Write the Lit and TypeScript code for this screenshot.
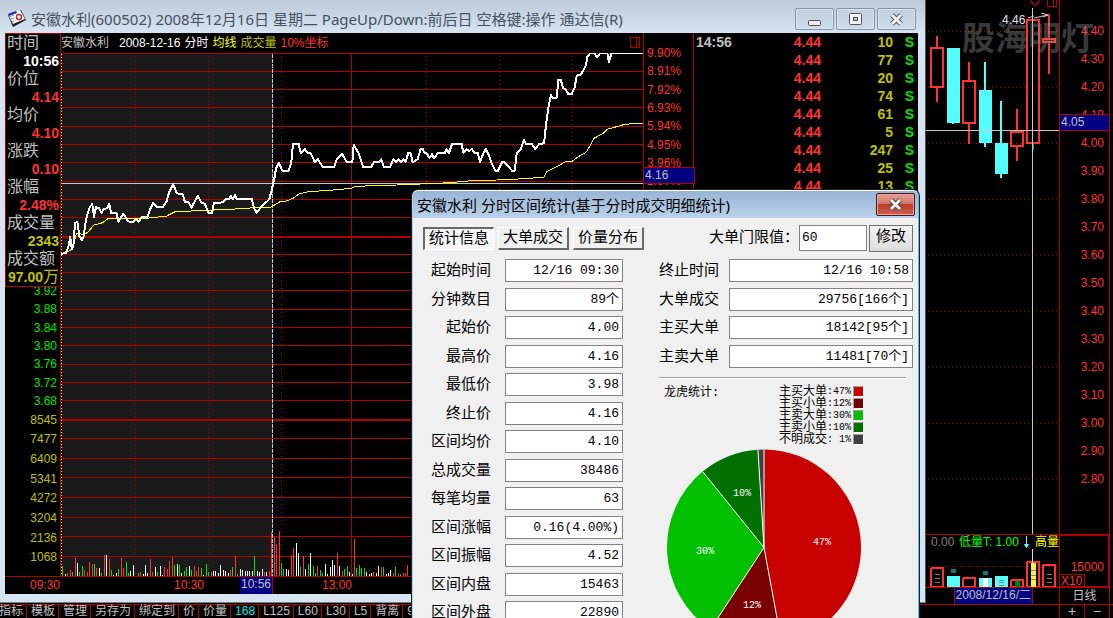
import { LitElement, html, svg, css } from "lit";
import { customElement } from "lit/decorators.js";

type Pt = [number, number];

/** Places a run of samples, stored at three units per pixel, on the chart. */
const place = (ox: number, oy: number, flat: number[]): Pt[] => {
  const out: Pt[] = [];
  for (let i = 0; i < flat.length; i += 2) out.push([ox + flat[i] / 3, oy + flat[i + 1] / 3]);
  return out;
};
const join = (pts: Pt[]) => pts.map(([x, y]) => `${x.toFixed(1)},${y.toFixed(1)}`).join(" ");

const PRICE = join([
  ...place(0, 200, [183,162,198,158,205,140,211,110,215,147,220,140,225,70,232,65,238,108,246,120,252,108,255,75,262,45,270,20,277,12,282,50,288,22,297,25,304,38,312,27,322,25,328,12,333,38,350,40,355,65,370,42,377,52,384,64,400,67,407,58,416,65,425,52,442,52,450,28]),
  ...place(0, 0, [460,609,472,622,488,622,500,603,508,575,520,553,530,580,548,583,555,607,566,607,574,623,594,587,603,607,615,612,625,638,636,638,642,609,670,607,677,597,688,598,692,587,698,597,705,585,710,597,755,597,762,625,770,638,780,625,795,610,808,598,815,570,820,550]),
  ...place(270, 0, [14,530,18,505,27,488,37,512,56,512,64,488,69,432,86,432,92,460,104,447,112,458,122,460,135,487,143,477,158,500,193,500,200,478,217,462,230,487,247,487,251,435,266,460,279,500,304,500,312,487,328,487,334,478,342,502,361,500,370,478,378,487,385,478,393,485,400,478,407,485,415,458,422,460,428,487,443,477,452,447,458,447,464,460,470,460,478,473,486,463,492,475,503,460,524,460,530,448,537,460,546,432,575,432,580,458,590,448,598,453,605,447,614,458,624,460,630,487,640,460,648,447,656,465,664,487,676,512,684,512,696,487,704,487,714,498,726,512,734,512,740,460,752,447,762,420,768,432,786,432,795,447,808,432]),
  ...place(540, 0, [12,430,18,375,25,325,33,285,37,293,50,293,55,240,62,240,70,265,77,268,85,282,95,282,104,262,110,227,122,224,132,208,138,195,142,170,150,160,163,160,171,172,180,160,202,160,207,187,214,160,311,160]),
]);

const AVERAGE = join([
  ...place(0, 200, [183,162,205,155,218,145,222,125,230,100,248,103,262,98,282,75,308,68,325,55,430,56,500,48,525,35,620,31,690,28,750,24]),
  ...place(270, 0, [0,623,30,605,48,603,70,595,85,583,115,575,180,571,245,565,255,560,300,557,380,555,452,552,505,550,550,547,605,542,680,540,745,537]),
  ...place(540, 0, [11,532,20,515,50,500,75,486,97,484,115,470,138,457,150,438,162,415,190,400,203,387,230,380,255,373,280,371,311,370]),
]);

/** Volume bars: position, height (three units per pixel) and colour letter. */
const bars = (text: string) =>
  text.split(" ").map((b) => {
    const [x, h, c] = b.split(",");
    return { x: Math.floor(Number(x) / 3), h: Number(h) / 3, c };
  });
const VOLUME = bars(
  "188,30,g 197,6,w 203,8,r 211,17,r 218,11,g 226,53,r 232,38,w 239,11,g 247,29,g 254,17,r 262,13,r 268,41,r 277,35,r 284,35,g 290,23,r 298,23,w 304,8,g 314,62,r 320,62,w 328,50,r 334,17,g 341,3,w 350,8,w 355,20,g 364,53,r 371,23,r 379,41,g 386,8,g 391,14,w 400,32,w 415,8,g 422,11,r 430,6,w 436,32,w 443,8,w 451,50,r 457,11,r 466,26,w 472,12,g 481,29,w 488,3,w 493,26,r 502,20,r 508,44,r 517,56,r 524,32,g 532,35,w 538,32,g 544,8,w 553,14,g 559,26,g 568,29,w 574,17,g 583,29,r 589,14,r 595,26,r 604,23,g 610,3,w 619,35,g 625,11,g 634,11,r 640,14,w 646,14,w 655,8,w 661,32,w 670,17,w 676,14,w 685,8,w 691,17,r 697,26,g 706,59,r 712,6,g 721,20,w 727,17,w 736,14,w 742,14,w 748,14,w 757,14,w 763,59,g 772,14,w 778,11,w 787,20,w 793,11,r 799,11,w 808,14,r 814,131,r 823,117,r 829,95,r 838,134,r 844,38,g 850,20,g 859,20,w 865,17,w 874,62,r 880,83,r 889,98,w 895,68,w 901,26,g 910,59,r 916,20,w 925,35,g 931,68,w 940,29,g 946,8,g 952,29,r 961,17,g 967,8,g 976,35,w 982,6,w 991,26,w 997,47,w 1003,32,w 1012,68,r 1018,29,w 1027,14,r 1033,20,g 1042,29,g 1048,11,w 1057,6,w 1063,110,r 1069,23,g 1078,32,g 1084,23,g 1093,23,g 1099,11,w 1108,6,w 1114,8,w 1120,11,r 1129,8,w 1135,29,w 1144,26,r 1150,26,g 1159,6,w 1165,8,w 1171,17,w 1180,8,r 1186,26,g 1195,8,r 1201,6,g 1210,8,r 1216,8,r 1222,32,r"
);

const PRICE_LINES = [53, 71, 89, 107, 126, 144, 162, 181, 199, 217, 254, 272, 290, 309, 327, 345, 364, 382, 400];
const VOLUME_LINES = [438, 458, 477, 497, 517, 536, 556];
const INFO: [string, string, string][] = [
  ["时间", "10:56", "white"],
  ["价位", "4.14", "red"],
  ["均价", "4.10", "red"],
  ["涨跌", "0.10", "red"],
  ["涨幅", "2.48%", "red"],
  ["成交量", "2343", "gold"],
  ["成交额", "97.00", "gold"],
];
const TICKS = ["10", "77", "20", "74", "61", "5", "247", "25", "13"];
const TOOLS = ["指标", "模板", "管理", "另存为", "绑定到", "价", "价量", "168", "L125", "L60", "L30", "L5", "背离", "9"];

const base = css`
  * { box-sizing: border-box; }
  button, input, table { font: inherit; color: inherit; }
  .red { color: #ff3232; }
  .gold { color: #c0c000; }
  .white { color: #fff; }
  .green { color: #00e600; }
`;

@customElement("minute-chart")
class MinuteChart extends LitElement {
  static styles = [base, css`
    :host {
      display: grid;
      position: relative;
      grid-template-columns: 55px minmax(0, 1fr) 51px 224px;
      grid-template-rows: 20px minmax(0, 1fr) 18px;
      background: #000;
      color: #c0c0c0;
      overflow: hidden;
    }
    .head { grid-area: 1 / 2; display: flex; gap: 4px; padding: 0 2px 0 1px; line-height: 20px; white-space: nowrap; }
    .head .name { margin-right: 6px; }
    .head .avg { color: #ff0; }
    .head .mark { margin-left: auto; width: 11px; height: 20px; }
    .plot { grid-area: 2 / 2; display: block; width: 100%; height: 100%; }
    .axis { display: grid; grid-template-rows: 366fr 157fr; padding: 11px 0 27px; line-height: 18px; }
    .left { grid-area: 1 / 1 / 4; text-align: right; padding-right: 3px; }
    .right { grid-area: 1 / 3 / 4; padding-left: 3px; border: solid #b00000; border-width: 0 1px; }
    .scale { display: grid; grid-template-rows: repeat(20, minmax(0, 1fr)); grid-template-columns: minmax(0, 1fr); align-items: center; }
    .scale.vol { grid-template-rows: repeat(8, minmax(0, 1fr)); }
    .scale.fall::before { content: ""; grid-area: 1 / 1 / 14; }
    .times { grid-area: 3 / 1 / 4 / 3; display: grid; grid-template-columns: 55px 144fr 148fr 291fr; position: relative; border-top: 1px solid #b00000; line-height: 16px; text-align: right; }
    .cursor { position: absolute; background: #000080; border: solid #b00000; color: #c0c0c0; }
    .time { left: 235px; top: 0; width: 33px; height: 17px; border-width: 0 1px 0 0; text-align: center; line-height: 15px; }
    .level { left: 638px; top: 134px; width: 52px; height: 17px; border-width: 1px; line-height: 15px; padding-left: 1px; }
    .ticks { grid-area: 1 / 4 / 4; align-self: start; width: 224px; table-layout: fixed; border-collapse: collapse; font-weight: bold; font-size: 14px; line-height: 18px; }
    .ticks td { padding: 0; height: 18px; text-align: right; }
    .ticks td:first-child { text-align: left; padding-left: 2px; width: 60px; }
    .ticks .price { width: 67px; }
    .ticks .lots { width: 72px; }
    .ticks .side { padding-right: 4px; }
    .info { position: absolute; left: 0; top: 0; width: 56px; margin: 0; background: #000; border: 1px solid #b00000; font-size: 16px; line-height: 18px; padding: 0 1px; white-space: nowrap; }
    .info dt { height: 18px; }
    .info dd { margin: 0; height: 18px; text-align: right; font-weight: bold; font-size: 14px; }
    .info .unit { font-weight: normal; font-size: 16px; line-height: 16px; }
  `];
  render() {
    const colour: Record<string, string> = { r: "#ff3232", g: "#00e600", w: "#fff" };
    return html`
      <div class="head">
        <span class="name">安徽水利</span><span class="white">2008-12-16</span><span class="white">分时</span>
        <span class="avg">均线</span><span class="gold">成交量</span><span class="red">10%坐标</span>
        <svg class="mark" viewBox="0 0 11 20" fill="none" stroke="#b00000" shape-rendering="crispEdges"><path d="M.5 4.5h9v10h-9zM6.500 4.500v10" /></svg>
      </div>
      <div class="axis left">
        <div class="scale fall">${["3.92", "3.88", "3.84", "3.80", "3.76", "3.72", "3.68"].map((t) => html`<span class="green">${t}</span>`)}</div>
        <div class="scale vol">${[8545, 7477, 6409, 5341, 4272, 3204, 2136, 1068].map((t) => html`<span class="gold">${t}</span>`)}</div>
      </div>
      <svg class="plot" viewBox="60 53 583 523" preserveAspectRatio="none" shape-rendering="crispEdges" fill="none">
        <rect x="61" y="53" width="211" height="523" fill="#1a1a1a" />
        ${PRICE_LINES.concat(VOLUME_LINES).map((y) => svg`<rect x="60" y=${y} width="583" height="1" fill="#b00000" />`)}
        <path d="M60 237H643M60 420H643" stroke="#b00000" stroke-width="2" />
        <path d="M60.500 53V576M351.500 53V576" stroke="#b00000" />
        <path d="M135.500 56V576M208.500 56V576M281.500 56V576M426.500 56V576M499.500 56V576M572.500 56V576" stroke="#b00000" stroke-dasharray="1 3" />
        <path d="M61.500 54V576" stroke="#ffff54" stroke-dasharray="1 2" />
        ${VOLUME.map((b) => svg`<rect x=${b.x} y=${576 - b.h} width="1" height=${b.h} fill=${colour[b.c]} />`)}
        <path d="M60 183.500H643" stroke="#c8c8c8" />
        <path d="M272.500 54V576" stroke="#000080" />
        <path d="M272.500 54V576" stroke="#c8c8c8" stroke-dasharray="4 1" />
        <polyline points=${AVERAGE} stroke="#ff0" stroke-width="1" />
        <polyline points=${PRICE} stroke="#fff" stroke-width="2" stroke-linejoin="round" />
      </svg>
      <div class="axis right red">
        <div class="scale">${["9.90%", "8.91%", "7.92%", "6.93%", "5.94%", "4.95%", "3.96%", "2.97%"].map((t) => html`<span>${t}</span>`)}</div>
      </div>
      <table class="ticks">
        ${TICKS.map((n, i) => html`<tr><td>${i ? "" : "14:56"}</td><td class="price red">4.44</td><td class="lots gold">${n}</td><td class="side green">S</td></tr>`)}
      </table>
      <div class="times red"><span>09:30</span><span>10:30</span><span>13:00</span><span class="cursor time">10:56</span></div>
      <span class="cursor level">4.16</span>
      <dl class="info">
        ${INFO.map(([k, v, c], i) => html`<dt>${k}</dt><dd class=${c}>${v}${i === 6 ? html`<span class="unit">万</span>` : ""}</dd>`)}
      </dl>
    `;
  }
}

@customElement("daily-chart")
class DailyChart extends LitElement {
  static styles = [base, css`
    :host {
      display: grid;
      position: relative;
      grid-template-columns: minmax(0, 1fr) 51px 3px;
      grid-template-rows: minmax(0, 1fr) 54px 16px 14px;
      background: #000;
      color: #c0c0c0;
      overflow: hidden;
    }
    .cell { border-left: 1px solid #b00000; border-right: 1px solid #b00000; }
    .plot { grid-area: 1 / 1; display: block; width: 100%; height: 100%; }
    .prices { grid-area: 1 / 2; position: relative; display: grid; grid-template-columns: minmax(0, 1fr); grid-template-rows: 17fr repeat(17, 28fr) 41fr; align-items: center; text-align: right; padding-right: 5px; line-height: 14px; }
    .prices::before { content: ""; grid-area: 1 / 1; }
    .level { position: absolute; left: 0; right: 0; top: 114px; height: 17px; background: #000080; border: solid #b00000; border-width: 1px 0; color: #c0c0c0; text-align: left; padding-left: 1px; line-height: 15px; }
    .volume { grid-area: 2 / 1; display: grid; grid-template-rows: 14px minmax(0, 1fr); border: solid #b00000; border-width: 1px 0; }
    .legend { display: flex; justify-content: space-between; padding: 0 0 0 5px; line-height: 15px; white-space: nowrap; color: #808080; }
    .low { color: #0f0; }
    .high { color: #ff0; }
    .down { width: 7px; height: 15px; }
    .bars { display: block; width: 100%; height: 100%; }
    .units { grid-area: 2 / 2; display: flex; flex-direction: column; justify-content: space-between; border: 2px solid #b00000; border-left-width: 1px; line-height: 14px; padding-top: 24px; }
    .units .max { text-align: right; padding-right: 4px; }
    .units .times { align-self: flex-start; border: solid #b00000; border-width: 1px 1px 0 0; padding: 0 2px 0 1px; line-height: 13px; }
    .date { grid-area: 3 / 1; justify-self: end; margin-right: 26px; background: #000080; border: solid #b00000; border-width: 0 1px; line-height: 15px; white-space: nowrap; padding: 0 1px; }
    .period { grid-area: 3 / 2; text-align: center; line-height: 16px; }
    .zoom { grid-area: 4 / 1 / 5 / 4; border-top: 1px solid #b00000; display: grid; grid-template-columns: minmax(0, 1fr) 25px 26px 3px; }
    .zoom button { grid-row: 1; background: none; border: 0; border-left: 1px solid #b00000; padding: 0; font-size: 14px; line-height: 13px; }
    .zoom .in { grid-column: 2; }
    .zoom .out { grid-column: 3; border-right: 1px solid #b00000; }
    .note { position: absolute; left: 76px; top: 13px; line-height: 14px; color: #e0e0e0; }
    .mark { position: absolute; left: 36px; top: 12px; font: bold 33px/48px "Noto Sans CJK SC", sans-serif; color: rgba(150, 150, 150, 0.4); white-space: nowrap; }
  `];
  render() {
    const labels = Array.from({ length: 17 }, (_, i) => (4.4 - i * 0.1).toFixed(2));
    return html`
      <svg class="plot" viewBox="926 0 133 534" preserveAspectRatio="none" shape-rendering="crispEdges" fill="none">
        <path d="M928 31.500H1059M928 87.500H1059M928 143.500H1059M928 199.500H1059M928 255.500H1059M928 311.500H1059M928 367.500H1059M928 423.500H1059M928 479.500H1059" stroke="#b00000" stroke-dasharray="1 3" />
        <path d="M1030 0l5 6 5-6M1047.500 0v6.500h9V0M1053.500 0v6.500" stroke="#b00000" />
        <g stroke="#ff3232" stroke-width="2">
          <path d="M937 36V48M937 87V102M969 62V81M969 124V144M1017 109V132M1017 147V161M1049 14V39M1049 43V74" />
          <path d="M931 48h12v39h-12zM963 81h12v42h-12zM1011 132h12v14h-12zM1027 20h12v123h-12zM1043 39h12v3h-12z" />
        </g>
        <path d="M947 48h13v75h-13zM952 123h2v1h-2zM979 90h13v53h-13zM984 62h2v85h-2zM995 143h13v31h-13zM1000 101h2v77h-2z" fill="#54ffff" />
        <path d="M1033 143v7" stroke="#109090" stroke-width="2" />
        <path d="M926 130.500H1059M1032.500 8V534" stroke="#c8c8c8" />
        <path d="M1028 18l6-2M1034 18l14-3M1041 13l7 2-5 2" stroke="#c8c8c8" shape-rendering="auto" />
      </svg>
      <div class="prices cell red">
        ${labels.map((t) => html`<span>${t}</span>`)}
        <span class="level">4.05</span>
      </div>
      <div class="volume">
        <div class="legend">
          <span>0.00</span><span class="low">低量T: 1.00</span>
          <svg class="down" viewBox="0 0 7 15" stroke="#54ffff" fill="#54ffff"><path d="M3.500 1v12M1.500 9.500h4l-2 3z" /></svg>
          <span class="high">高量</span>
        </div>
        <svg class="bars" viewBox="926 549 133 38" preserveAspectRatio="none" shape-rendering="crispEdges" fill="none">
          <path d="M928 566.500H1059" stroke="#b00000" stroke-dasharray="1 3" />
          <g stroke="#ff3232" stroke-width="2">
            <rect x="931" y="568" width="12" height="19" rx="1" /><rect x="963" y="578" width="12" height="9" rx="1" />
            <rect x="1011" y="580" width="12" height="7" rx="1" /><rect x="1027" y="562" width="12" height="25" rx="1" />
            <rect x="1043" y="565" width="12" height="22" rx="1" />
          </g>
          <path d="M947 576h13v11h-13zM979 578h13v9h-13zM995 576h13v11h-13z" fill="#54ffff" />
          <path d="M951 569h5v4h-5zM983 571h5v4h-5z" fill="#008080" />
          <path d="M983 578h5v9h-5z" fill="#fff" />
          <path d="M1015 581h5v6h-5z" fill="#008000" />
          <path d="M1031 563h5v24h-5z" fill="#ff0" />
          <path d="M1032.500 549V587" stroke="#d8d8ff" />
          <path d="M935 574.500h5M935 578.500h5M935 582.500h5M999 580.500h5M999 582.500h5M999 585.500h5M1031 570.500h5M1031 575.500h5M1031 579.500h5M1047 574.500h5M1047 578.500h5M1047 582.500h5" stroke="#808080" />
        </svg>
      </div>
      <div class="units red"><span class="max">15000</span><span class="times">X10</span></div>
      <span class="date">2008/12/16/二</span>
      <span class="period cell">日线</span>
      <div class="zoom"><button class="in" aria-label="放大">+</button><button class="out" aria-label="缩小">−</button></div>
      <span class="note">4.46</span>
      <span class="mark">股海明灯</span>
    `;
  }
}

@customElement("stats-dialog")
class StatsDialog extends LitElement {
  static styles = [base, css`
    :host {
      display: block;
      background: #f0f0f0;
      border: 1px solid #b4d0ec;
      border-top-color: #fff;
      border-right-color: #3cc8f0;
      border-radius: 6px 6px 0 0;
      box-shadow: 0 0 0 1px #202020;
      overflow: hidden;
      color: #000;
      font: 15px/22px "Liberation Mono", "Noto Sans CJK SC", monospace;
    }
    .bar { display: flex; justify-content: space-between; height: 27px; padding: 2px 3px 0 4px; background: linear-gradient(#98b4d4, #b9d1ea); font: 15px/24px "Noto Sans", "Noto Sans CJK SC", sans-serif; }
    .bar h1 { margin: 0; font: inherit; font-size: 15px; white-space: nowrap; }
    .close { width: 39px; height: 23px; padding: 0; border: 1px solid #48181c; border-radius: 2px; box-shadow: inset 0 0 0 1px #e8a49c; background: linear-gradient(#e0a090, #d4796c 45%, #b83c28 50%, #cc6450); }
    .close svg { display: block; margin: auto; }
    .body { display: grid; grid-template-columns: 200px minmax(0, 1fr); column-gap: 36px; row-gap: 7px; padding: 6px 5px 0 10px; }
    .tabs { display: flex; gap: 4px; align-items: center; height: 28px; white-space: nowrap; }
    .tabs button { flex: none; width: 71px; height: 23px; padding: 2px 0 0; line-height: 18px; background: #f0f0f0; border: 1px solid #fff; border-right: 2px solid #696969; border-bottom: 2px solid #696969; }
    .tabs .on { background: repeating-conic-gradient(#fff 0 25%, #f0f0f0 0 50%) 0 0 / 2px 2px; border: 1px solid #fff; border-left: 2px solid #696969; border-top: 2px solid #696969; }
    .limit { display: flex; justify-content: flex-end; align-items: center; white-space: nowrap; line-height: 26px; }
    .limit label { padding-top: 2px; }
    .limit input { width: 68px; height: 26px; margin: 0 2px 0 0; padding: 0 2px; text-align: left; }
    .limit button { width: 44px; height: 27px; padding: 0; line-height: 24px; background: linear-gradient(#f4f4f4, #dcdcdc); border: 1px solid #707070; }
    input { border: 1px solid #828282; border-radius: 0; background: #fff; font-size: 13px; min-width: 0; height: 23px; padding: 0 3px; text-align: right; outline: 0; }
    .fields { display: grid; grid-auto-rows: 29px 28px; align-items: start; line-height: 26px; text-align: right; white-space: nowrap; }
    .left { grid-template-columns: minmax(0, 1fr) 118px; column-gap: 14px; padding-left: 8px; }
    .right { grid-template-columns: 60px minmax(0, 1fr); column-gap: 10px; }
    hr { margin: 4px 7px 7px 0; border: 0; border-top: 1px solid #a0a0a0; border-bottom: 1px solid #fff; }
    .share { display: flex; justify-content: space-between; padding: 0 49px 0 5px; font-size: 12px; line-height: 14px; }
    ul { list-style: none; margin: 0; padding: 0; font-size: 12px; line-height: 12px; }
    li { display: flex; justify-content: flex-end; height: 12px; white-space: pre; }
    .num { font-size: 10px; }
    .chip { width: 11px; height: 11px; margin-left: 2px; border: 1px solid #a0a0a0; border-right-color: #fff; border-bottom-color: #fff; }
    .c0 { background: #c80000; }
    .c1 { background: #780000; }
    .c2 { background: #00c000; }
    .c3 { background: #007000; }
    .c4 { background: #404040; }
    .pie { display: block; margin: 3px 0 0 7px; font-size: 10px; }
  `];
  private field(label: string, value: string, id: string) {
    return html`<label for=${id}>${label}</label><input id=${id} readonly .value=${value} />`;
  }
  render() {
    const left = [["起始时间", "12/16 09:30"], ["分钟数目", "89个"], ["起始价", "4.00"], ["最高价", "4.16"], ["最低价", "3.98"], ["终止价", "4.16"], ["区间均价", "4.10"], ["总成交量", "38486"], ["每笔均量", "63"], ["区间涨幅", "0.16(4.00%)"], ["区间振幅", "4.52"], ["区间内盘", "15463"], ["区间外盘", "22890"]];
    const right = [["终止时间", "12/16 10:58"], ["大单成交", "29756[166个]"], ["主买大单", "18142[95个]"], ["主卖大单", "11481[70个]"]];
    const legend = [["主买大单", ":47%"], ["主买小单", ":12%"], ["主卖大单", ":30%"], ["主卖小单", ":10%"], ["不明成交", ": 1%"]];
    const stops = [0, 0.4706, 0.593, 0.891, 0.99, 1];
    const fills = ["#c80000", "#780000", "#00c000", "#007000", "#404040"];
    const at = (f: number) => `${(98 + 97 * Math.sin(f * 2 * Math.PI)).toFixed(2)} ${(98.5 - 98 * Math.cos(f * 2 * Math.PI)).toFixed(2)}`;
    return html`
      <header class="bar">
        <h1>安徽水利 分时区间统计(基于分时成交明细统计)</h1>
        <button class="close" aria-label="关闭"><svg width="15" height="13" viewBox="0 0 15 13"><path d="M3 2l9 9M12 2l-9 9" stroke="#5a3a40" stroke-width="5" /><path d="M3 2l9 9M12 2l-9 9" stroke="#f4f4f4" stroke-width="3" /></svg></button>
      </header>
      <div class="body">
        <div class="tabs"><button class="on">统计信息</button><button>大单成交</button><button>价量分布</button></div>
        <div class="limit"><label for="limit">大单门限值：</label><input id="limit" .value=${"60"} /><button>修改</button></div>
        <div class="fields left">${left.map(([k, v], i) => this.field(k, v, `l${i}`))}</div>
        <div>
          <div class="fields right">${right.map(([k, v], i) => this.field(k, v, `r${i}`))}</div>
          <hr />
          <div class="share">
            <span>龙虎统计:</span>
            <ul>${legend.map(([k, v], i) => html`<li><span>${k}</span><span class="num">${v}</span><span class="chip c${i}"></span></li>`)}</ul>
          </div>
          <svg class="pie" width="196" height="197" viewBox="0 0 196 197">
            ${fills.map((f, i) => svg`<path d=${`M98 98.5L${at(stops[i])}A97 98 0 0 1 ${at(stops[i + 1])}Z`} fill=${f} />`)}
            ${stops.slice(1).map((s) => svg`<path d=${`M98 98.5L${at(s)}`} stroke="#fff" />`)}
            <g fill="#fff" text-anchor="middle"><text x="156" y="96">47%</text><text x="39" y="105">30%</text><text x="76" y="47">10%</text><text x="86" y="159">12%</text></g>
          </svg>
        </div>
      </div>
    `;
  }
}

@customElement("app-root")
class AppRoot extends LitElement {
  static styles = [base, css`
    :host {
      display: grid;
      position: relative;
      height: 100vh;
      grid-template-columns: minmax(0, 1fr) 187px;
      grid-template-rows: minmax(0, 1fr) 16px;
      overflow: hidden;
      background: #000;
      font: 12px/18px "Liberation Sans", "Noto Sans CJK SC", sans-serif;
    }
    .window { display: grid; grid-template-rows: 33px minmax(0, 1fr); padding: 0 7px 8px 5px; border-right: 1px solid #505050; background: linear-gradient(#bccad8, #d7e4f2 33px); }
    .bar { display: flex; align-items: center; gap: 4px; padding: 5px 2px 0 2px; color: #46525e; white-space: nowrap; }
    .bar h1 { margin: 0 auto 0 0; font: 15px/24px "Noto Sans", "Noto Sans CJK SC", sans-serif; }
    .bar button { display: grid; place-items: center; width: 39px; height: 22px; padding: 0; border: 1px solid #8494a8; border-radius: 2px; box-shadow: inset 0 0 0 1px #dce6f0; background: linear-gradient(#c2d0de, #cddae8); }
    .buttons { display: flex; gap: 2px; }
    .side { grid-area: 1 / 2 / 3; }
    .tools { display: flex; min-width: 0; overflow: hidden; border-top: 1px solid #808080; padding-top: 1px; }
    .strip { display: flex; flex: 1; margin-left: -4px; border-top: 1px solid #b00000; }
    .strip button { flex: none; padding: 0 3px; border: 0; border-right: 1px solid #b00000; background: #000; color: #c0c0c0; line-height: 13px; }
    .strip button + button { padding-left: 4px; }
    .strip .on { color: #00e6e6; }
    .dialog { position: absolute; left: 412px; top: 190px; width: 507px; height: 640px; }
  `];
  render() {
    return html`
      <section class="window">
        <header class="bar">
          <svg width="20" height="20" viewBox="0 0 20 20">
            <path d="M1 6L14 1l5 10L6 18z" fill="#202020" /><path d="M1 5L13 1l5 9L6 15z" fill="#f4f4f8" />
            <path d="M1 5L9 2l1 2-8 3z" fill="#1828b0" /><path d="M2 8l5-2M3 10l4-1M5 13l2-1" stroke="#9098b0" />
            <circle cx="12" cy="8" r="2.500" fill="#fff" stroke="#b83030" stroke-width="1.500" />
          </svg>
          <h1>安徽水利(600502) 2008年12月16日 星期二 PageUp/Down:前后日 空格键:操作 通达信(R)</h1>
          <div class="buttons">
            <button aria-label="最小化"><svg width="13" height="16" viewBox="0 0 13 16"><rect x=".5" y="9.500" width="12" height="5" rx="1" fill="#ececf0" stroke="#50525c" /></svg></button>
            <button aria-label="最大化"><svg width="13" height="13" viewBox="0 0 13 13"><rect x=".5" y=".5" width="12" height="11" rx="1" fill="#f4f4f4" stroke="#50525c" /><rect x="4.500" y="4.500" width="4" height="3" fill="#b8c8d8" stroke="#50525c" /></svg></button>
            <button aria-label="关闭"><svg width="15" height="13" viewBox="0 0 15 13"><path d="M3 2l9 9M12 2l-9 9" stroke="#50525c" stroke-width="5" /><path d="M3 2l9 9M12 2l-9 9" stroke="#f4f4f4" stroke-width="3" /></svg></button>
          </div>
        </header>
        <minute-chart></minute-chart>
      </section>
      <nav class="tools"><div class="strip">${TOOLS.map((t) => html`<button class=${t === "168" ? "on" : ""}>${t}</button>`)}</div></nav>
      <daily-chart class="side"></daily-chart>
      <stats-dialog class="dialog"></stats-dialog>
    `;
  }
}
